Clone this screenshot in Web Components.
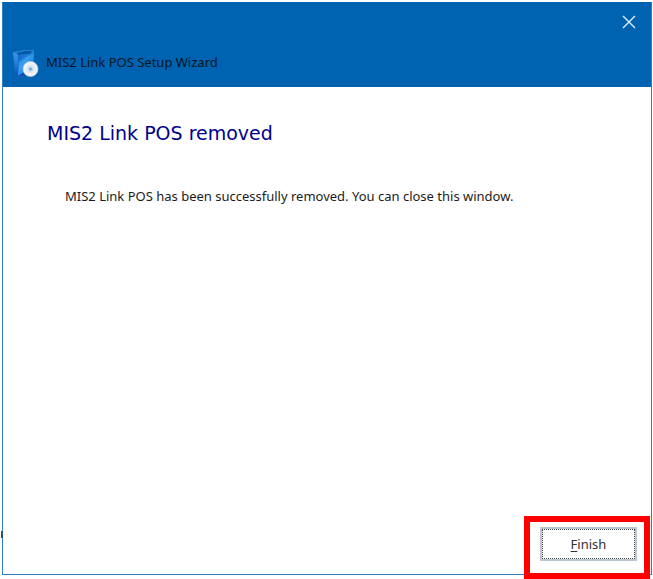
<!DOCTYPE html>
<html lang="en">
<head>
<meta charset="utf-8">
<title>MIS2 Link POS Setup Wizard</title>
<style>
html, body { height: 100%; }
body { margin: 0; background: #fff; font-family: "Noto Sans", "DejaVu Sans", sans-serif; font-size: 13px; overflow: hidden; }
</style>
</head>
<body>
<setup-window>
  <wizard-header slot="header">MIS2 Link POS Setup Wizard</wizard-header>
  <wizard-page slot="page" heading="MIS2 Link POS removed">MIS2 Link POS has been successfully removed. You can close this window.</wizard-page>
  <wizard-button slot="footer" key="F">inish</wizard-button>
</setup-window>
<script>
class BaseElement extends HTMLElement {
  constructor() {
    super();
    this.attachShadow({ mode: "open" }).innerHTML = this.constructor.markup;
  }
}

customElements.define("setup-window", class extends BaseElement {
  static markup = `
    <style>
      :host { display: block; box-sizing: border-box; height: 100vh; padding: 2px 1px 4px 2px; position: relative; }
      main { box-sizing: border-box; height: 100%; display: flex; flex-direction: column; border: 1px solid #2f7fc1; border-top-color: #0063b1; }
      .page { flex: 1; }
      footer { display: flex; justify-content: flex-end; padding: 0 14px 13px 0; }
      .edge { position: absolute; left: 1px; bottom: 41px; width: 2px; height: 7px; background: #33566f; }
    </style>
    <main>
      <slot name="header"></slot>
      <div class="page"><slot name="page"></slot></div>
      <footer><slot name="footer"></slot></footer>
    </main>
    <span class="edge"></span>`;
});

customElements.define("installer-icon", class extends BaseElement {
  static markup = `
    <style>:host { display: block; padding-top: 4px; } svg { display: block; }</style>
    <svg width="28" height="30" viewBox="0 0 28 30" aria-hidden="true">
      <defs>
        <linearGradient id="front" x1="0" y1="0" x2="1" y2="1">
          <stop offset="0" stop-color="#0f62c4"/><stop offset=".5" stop-color="#2a94ec"/><stop offset="1" stop-color="#1260c8"/>
        </linearGradient>
        <linearGradient id="side" x1="0" y1="0" x2="0" y2="1">
          <stop offset="0" stop-color="#3aa0ea"/><stop offset="1" stop-color="#0a50b8"/>
        </linearGradient>
        <radialGradient id="disc">
          <stop offset="0" stop-color="#d4e8f8"/><stop offset=".5" stop-color="#e6e9ef"/><stop offset="1" stop-color="#f8f9fb"/>
        </radialGradient>
      </defs>
      <path d="M1 3 12 1 22 1 22 5 5 7Z" fill="#2580d0"/>
      <path d="M5 4 13 2 20 2 18 5 6 6Z" fill="#0758a8"/>
      <path d="M1 3 6 6 6 28 3 25Z" fill="url(#side)"/>
      <path d="M6 6 22 5 21 26 6 28Z" fill="url(#front)"/>
      <path d="M7 13 15 8 20 6 13 15 7 24Z" fill="#57b5f5" opacity=".45"/>
      <path d="M6 27 12 23 14 27 6 28Z" fill="#0a4fae"/>
      <circle cx="18.500" cy="20" r="7.500" fill="url(#disc)" stroke="#bccbdc" stroke-width=".7"/>
      <circle cx="18.500" cy="20" r="2.500" fill="#b7d6ed"/>
      <circle cx="18.500" cy="20" r="1.200" fill="#58a4da"/>
    </svg>`;
});

customElements.define("wizard-header", class extends BaseElement {
  static markup = `
    <style>
      :host { display: block; background: #0063b1; color: #051522; padding-bottom: 6px; }
      .bar { display: flex; justify-content: flex-end; height: 38px; }
      button { width: 45px; height: 38px; padding: 0; border: 0; background: none; color: #e4eef7; display: grid; place-items: center; }
      .title { display: flex; align-items: center; box-sizing: border-box; height: 40px; padding: 2px 0 0 9px; gap: 6px; }
      h1 { margin: 0; font: inherit; line-height: 18px; }
    </style>
    <div class="bar"><button type="button" aria-label="Close"><svg width="14" height="14" viewBox="0 0 14 14" fill="none" stroke="currentColor" stroke-width="1.400"><path d="M1 1 13 13M13 1 1 13"/></svg></button></div>
    <div class="title"><installer-icon></installer-icon><h1><slot></slot></h1></div>`;
});

customElements.define("wizard-page", class extends BaseElement {
  static markup = `
    <style>
      :host { display: block; padding: 34px 44px 0; color: #1c1c1c; }
      h2 { margin: 0; font: 400 19px/24px "DejaVu Sans", sans-serif; color: #00008b; }
      p { margin: 42px 0 0; padding-left: 18px; line-height: 18px; }
    </style>
    <h2></h2><p><slot></slot></p>`;
  connectedCallback() {
    this.shadowRoot.querySelector("h2").textContent = this.getAttribute("heading");
  }
});

customElements.define("wizard-button", class extends BaseElement {
  static markup = `
    <style>
      :host { display: block; position: relative; }
      button { display: block; box-sizing: border-box; min-width: 97px; height: 34px; padding: 0; border: 2px solid #bcc6d0; background: #fff; font: inherit; color: #333; outline: 1px dotted #444; outline-offset: -3px; }
      u { text-underline-offset: 2px; }
      .highlight { position: absolute; inset: -11px -13px -18px -16px; border: 6px solid #f00; pointer-events: none; }
    </style>
    <button type="button"><u></u><slot></slot></button>
    <span class="highlight"></span>`;
  connectedCallback() {
    this.shadowRoot.querySelector("u").textContent = this.getAttribute("key");
  }
});
</script>
</body>
</html>
